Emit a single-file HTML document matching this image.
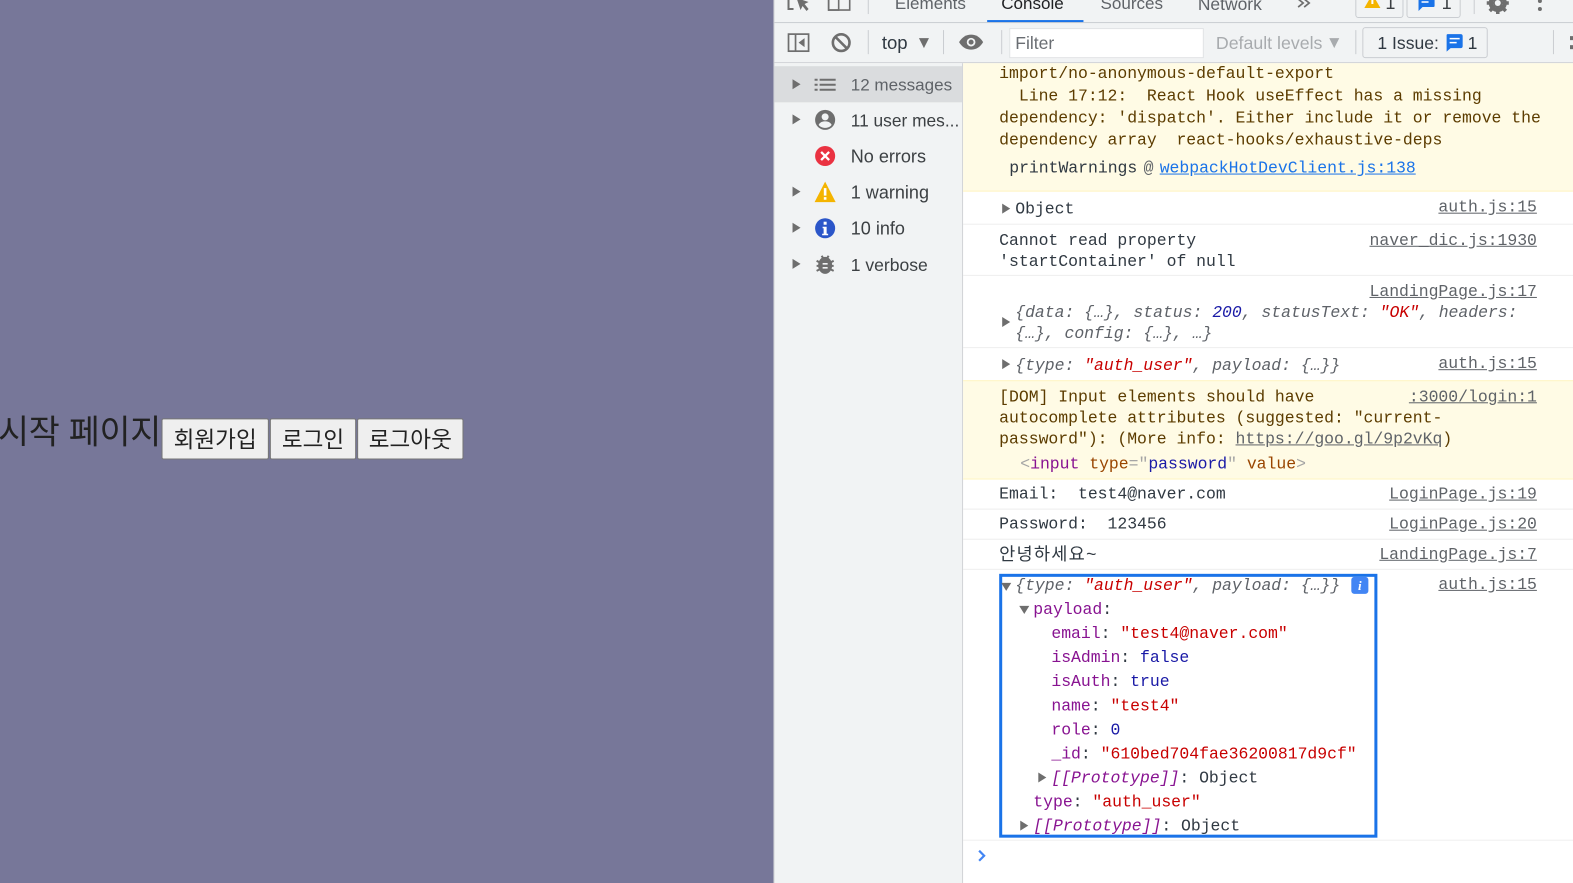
<!DOCTYPE html>
<html><head><meta charset="utf-8">
<style>
html,body{margin:0;padding:0;width:1573px;height:883px;overflow:hidden;background:#fff}
body{position:relative;font-family:"Liberation Sans","Noto Sans CJK KR",sans-serif}
#w{position:absolute;left:0;top:0;width:1573px;height:883px;transform:scale(1.0032);transform-origin:0 0}
.b{position:absolute}
.t{position:absolute;white-space:pre;line-height:20px;height:20px}
.m{font-family:"Liberation Mono","Noto Sans CJK KR",monospace;font-size:16.4px;letter-spacing:-.02px;color:#303942;margin-top:1px}
.s{font-size:18px;color:#3c4043}
.y{color:#5c3c00}
.r{color:#5f6368;text-decoration:underline;right:41px}
.i{font-style:italic;color:#5e6268}
.red{color:#c80000}.blu{color:#1a1aa6}.pur{color:#881391}.dk{color:#303942}
.arr{position:absolute;width:0;height:0;border-left:8px solid #6e6e6e;border-top:5.5px solid transparent;border-bottom:5.5px solid transparent}
.dn{position:absolute;width:0;height:0;border-top:8px solid #6e6e6e;border-left:5.5px solid transparent;border-right:5.5px solid transparent}
.btn{position:absolute;top:417px;height:39px;background:#efefef;border:1px solid #767676;border-radius:2px;box-sizing:content-box;color:#222;font-size:22.5px;line-height:42px;text-align:center;white-space:pre}
svg{position:absolute;overflow:visible}
</style></head><body><div id="w">

<!-- page -->
<div class="b" style="left:0;top:0;width:772px;height:890px;background:#777799"></div>
<div class="t" style="left:-2px;top:412px;height:40px;line-height:40px;font-size:33.6px;color:#222;letter-spacing:-.2px">시작 페이지</div>
<div class="btn" style="left:161px;width:105px">회원가입</div>
<div class="btn" style="left:269px;width:84px">로그인</div>
<div class="btn" style="left:356px;width:104px">로그아웃</div>

<!-- devtools -->
<div class="b" style="left:771px;top:0;width:802px;height:890px;background:#fff;border-left:1px solid #cacdd1;box-sizing:border-box"></div>
<div class="b" style="left:772px;top:0;width:801px;height:62px;background:#f1f3f4"></div>
<div class="b" style="left:772px;top:22px;width:801px;height:1px;background:#cacdd1"></div>
<div class="b" style="left:772px;top:62px;width:801px;height:1px;background:#cacdd1"></div>

<!-- top tabs -->
<svg style="left:785px;top:-4px" width="24" height="18" viewBox="0 0 24 18"><path d="M1 2v11h5" fill="none" stroke="#6e6e6e" stroke-width="2"/><path d="M9 2l4 12 2-4 4 5 2-2-4-5 4-2z" fill="#6e6e6e"/></svg>
<svg style="left:825px;top:-4px" width="24" height="18" viewBox="0 0 24 18"><rect x="1" y="1" width="21" height="13" fill="none" stroke="#6e6e6e" stroke-width="1.6"/><rect x="1" y="1" width="10" height="13" fill="none" stroke="#6e6e6e" stroke-width="1.6"/></svg>
<div class="b" style="left:865px;top:0;width:1px;height:14px;background:#cacdd1"></div>
<div class="t s" style="left:892px;top:-6px;color:#5f6368;font-size:17px">Elements</div>
<div class="t s" style="left:998px;top:-6px;color:#202124;font-size:17px">Console</div>
<div class="b" style="left:984px;top:20px;width:96px;height:2px;background:#1a73e8"></div>
<div class="t s" style="left:1097px;top:-6px;color:#5f6368;font-size:17px">Sources</div>
<div class="t s" style="left:1194px;top:-6px;color:#5f6368;font-size:17.400px">Network</div>
<svg style="left:1293px;top:-2px" width="16" height="12" viewBox="0 0 16 12"><path d="M1 1l5 4-5 4M7 1l5 4-5 4" fill="none" stroke="#6e6e6e" stroke-width="1.7"/></svg>
<div class="b" style="left:1351px;top:-8px;width:46px;height:24px;border:1px solid #cacdd1;border-radius:3px"></div>
<svg style="left:1360px;top:-3px" width="16" height="12" viewBox="0 0 16 12"><path d="M8 -3L16 11H0z" fill="#f4b400"/><rect x="7" y="2" width="2" height="5" fill="#fff"/></svg>
<div class="t s" style="left:1381px;top:-7px;color:#3c4043">1</div>
<div class="b" style="left:1402px;top:-8px;width:52px;height:24px;border:1px solid #cacdd1;border-radius:3px"></div>
<svg style="left:1413px;top:-3px" width="18" height="14" viewBox="0 0 18 14"><path d="M2 -4h14a1.500 1.500 0 0 1 1 1v12a1 1 0 0 1-1 1H5l-4 4V-3a1 1 0 0 1 1-1z" fill="#1a73e8"/><path d="M4 1h10M4 5h7" stroke="#fff" stroke-width="1.500"/></svg>
<div class="t s" style="left:1437px;top:-7px;color:#3c4043">1</div>
<div class="b" style="left:1469px;top:0;width:1px;height:14px;background:#cacdd1"></div>
<svg style="left:1481px;top:-9px" width="24" height="24" viewBox="0 0 24 24"><circle cx="12" cy="12" r="7" fill="none" stroke="#6e6e6e" stroke-width="4"/><path d="M12 1v22M1 12h22M4 4l16 16M20 4L4 20" stroke="#6e6e6e" stroke-width="3.500"/><circle cx="12" cy="12" r="3" fill="#f1f3f4"/></svg>
<div class="b" style="left:1533px;top:-1px;width:4px;height:4px;border-radius:50%;background:#6e6e6e"></div>
<div class="b" style="left:1533px;top:7px;width:4px;height:4px;border-radius:50%;background:#6e6e6e"></div>

<!-- toolbar -->
<svg style="left:785px;top:33px" width="23" height="20" viewBox="0 0 23 20"><rect x="1" y="1" width="20" height="17" fill="none" stroke="#6e6e6e" stroke-width="1.700"/><path d="M8 1v17" stroke="#6e6e6e" stroke-width="1.700"/><path d="M17 5v9l-6-4.500z" fill="#6e6e6e"/></svg>
<svg style="left:828px;top:32px" width="21" height="21" viewBox="0 0 21 21"><circle cx="10.500" cy="10.500" r="8.300" fill="none" stroke="#6e6e6e" stroke-width="2.600"/><path d="M4.500 4.500l12 12" stroke="#6e6e6e" stroke-width="2.600"/></svg>
<div class="b" style="left:865px;top:30px;width:1px;height:24px;background:#cacdd1"></div>
<div class="t s" style="left:879px;top:33px;color:#303942;font-size:18.500px">top</div>
<div class="dn" style="left:916px;top:38px;border-top:10px solid #6e6e6e;border-left-width:5.500px;border-right-width:5.500px"></div>
<div class="b" style="left:940px;top:30px;width:1px;height:24px;background:#cacdd1"></div>
<svg style="left:956px;top:34px" width="24" height="16" viewBox="0 0 24 16"><path d="M0 8C3 3 7 .5 12 .5S21 3 24 8c-3 5-7 7.500-12 7.500S3 13 0 8z" fill="#6e6e6e"/><circle cx="12" cy="8" r="4.300" fill="#f1f3f4"/><circle cx="12" cy="8" r="2.500" fill="#6e6e6e"/></svg>
<div class="b" style="left:998px;top:30px;width:1px;height:24px;background:#cacdd1"></div>
<div class="b" style="left:1006px;top:28px;width:192px;height:28px;background:#fff;border:1px solid #e0e2e4"></div>
<div class="t s" style="left:1012px;top:33px;color:#6a6e73;font-size:17.500px">Filter</div>
<div class="t s" style="left:1212px;top:33px;color:#a8abae;font-size:17.700px">Default levels</div>
<div class="dn" style="left:1325px;top:38px;border-top:10px solid #a8abae;border-left-width:5.500px;border-right-width:5.500px"></div>
<div class="b" style="left:1351px;top:30px;width:1px;height:24px;background:#cacdd1"></div>
<div class="b" style="left:1358px;top:27px;width:123px;height:29px;border:1px solid #cacdd1;border-radius:3px"></div>
<div class="t s" style="left:1373px;top:33px;color:#303942;font-size:17.500px">1 Issue:</div>
<svg style="left:1441px;top:34px" width="18" height="17" viewBox="0 0 18 17"><path d="M2 0h13a2 2 0 0 1 2 2v10a2 2 0 0 1-2 2H5l-4 3.500V1a1 1 0 0 1 1-1z" fill="#1a73e8"/><path d="M4 4.500h10M4 8.500h7" stroke="#fff" stroke-width="1.500"/></svg>
<div class="t s" style="left:1463px;top:33px;color:#303942;font-size:17.500px">1</div>
<div class="b" style="left:1548px;top:30px;width:1px;height:24px;background:#cacdd1"></div>
<div class="b" style="left:1565px;top:36px;width:5px;height:4px;background:#6e6e6e"></div>
<div class="b" style="left:1565px;top:45px;width:5px;height:4px;background:#6e6e6e"></div>

<!-- sidebar -->
<div class="b" style="left:772px;top:63px;width:187px;height:827px;background:#f1f3f4"></div>
<div class="b" style="left:959px;top:63px;width:1px;height:827px;background:#d0d2d6"></div>
<div class="b" style="left:772px;top:66px;width:187px;height:36px;background:#dadcde"></div>

<div class="arr" style="left:790px;top:79px"></div>
<svg style="left:812px;top:78px" width="22" height="13" viewBox="0 0 22 13"><path d="M0 1.500h3M0 6.500h3M0 11.500h3M5 1.500h16M5 6.500h16M5 11.500h16" stroke="#6e6e6e" stroke-width="2"/></svg>
<div class="t s" style="left:848px;top:75px;color:#5f6368;font-size:17px">12 messages</div>

<div class="arr" style="left:790px;top:114px"></div>
<svg style="left:812px;top:109px" width="21" height="21" viewBox="0 0 21 21"><circle cx="10.500" cy="10.500" r="10" fill="#6e6e6e"/><circle cx="10.500" cy="7.500" r="3.500" fill="#f1f3f4"/><path d="M4 15.500c1.500-3 4-3.500 6.500-3.500s5 .5 6.500 3.500c-1.500 2-4 3-6.500 3s-5-1-6.500-3z" fill="#f1f3f4"/></svg>
<div class="t s" style="left:848px;top:110px;font-size:17.300px">11 user mes...</div>

<svg style="left:812px;top:145px" width="21" height="21" viewBox="0 0 21 21"><circle cx="10.500" cy="10.500" r="10" fill="#ea3241"/><path d="M6.500 6.500l8 8M14.500 6.500l-8 8" stroke="#fff" stroke-width="2.300"/></svg>
<div class="t s" style="left:848px;top:146px">No errors</div>

<div class="arr" style="left:790px;top:186px"></div>
<svg style="left:812px;top:181px" width="21" height="21" viewBox="0 0 21 21"><path d="M10.500 0L21 20.500H0z" fill="#f4b400"/><rect x="9.200" y="6.500" width="2.600" height="7.500" fill="#fff"/><rect x="9.200" y="15.500" width="2.600" height="2.600" fill="#fff"/></svg>
<div class="t s" style="left:848px;top:182px">1 warning</div>

<div class="arr" style="left:790px;top:222px"></div>
<svg style="left:812px;top:217px" width="21" height="21" viewBox="0 0 21 21"><circle cx="10.500" cy="10.500" r="10" fill="#2b56c9"/><rect x="9" y="4" width="3" height="3" fill="#fff"/><path d="M8 9h4v7h1.500v1.500h-6V16H9v-5.500H8z" fill="#fff"/></svg>
<div class="t s" style="left:848px;top:218px">10 info</div>

<div class="arr" style="left:790px;top:258px"></div>
<svg style="left:813px;top:253px" width="19" height="21" viewBox="0 0 19 21"><ellipse cx="9.500" cy="11.500" rx="7" ry="8.500" fill="#6e6e6e"/><path d="M1 7l4 2M18 7l-4 2M1 12h4M18 12h-4M1 17l4-2M18 17l-4-2M6 2l2 3M13 2l-2 3" stroke="#6e6e6e" stroke-width="2"/><path d="M7 10h5M7 14h5" stroke="#f1f3f4" stroke-width="1.600"/></svg>
<div class="t s" style="left:848px;top:254px;font-size:17.500px">1 verbose</div>

<!-- warning block -->
<div class="b" style="left:960px;top:63px;width:613px;height:128px;background:#fffbe5;border-bottom:1px solid #fff5c2;box-sizing:border-box"></div>
<div class="t m y" style="left:996px;top:63px">import/no-anonymous-default-export</div>
<div class="t m y" style="left:996px;top:85px">  Line 17:12:  React Hook useEffect has a missing</div>
<div class="t m y" style="left:996px;top:107px">dependency: 'dispatch'. Either include it or remove the</div>
<div class="t m y" style="left:996px;top:129px">dependency array  react-hooks/exhaustive-deps</div>
<div class="t m" style="left:1006px;top:157px">printWarnings</div>
<div class="t m" style="left:1140px;top:157px;color:#5f6368;letter-spacing:0">@</div>
<div class="t m" style="left:1156px;top:157px;color:#1a73e8;text-decoration:underline">webpackHotDevClient.js:138</div>

<!-- Object -->
<div class="arr" style="left:999px;top:203px"></div>
<div class="t m" style="left:1012px;top:198px">Object</div>
<div class="t m r" style="top:196px">auth.js:15</div>
<div class="b" style="left:960px;top:223px;width:613px;height:1px;background:#eeeeee"></div>

<div class="t m" style="left:996px;top:229px">Cannot read property</div>
<div class="t m" style="left:996px;top:250px">'startContainer' of null</div>
<div class="t m r" style="top:229px">naver_dic.js:1930</div>
<div class="b" style="left:960px;top:274px;width:613px;height:1px;background:#eeeeee"></div>

<div class="t m r" style="top:280px">LandingPage.js:17</div>
<div class="arr" style="left:999px;top:316px"></div>
<div class="t m i" style="left:1012px;top:301px">{data: {…}, status: <span class="blu">200</span>, statusText: <span class="red">"OK"</span>, headers:</div>
<div class="t m i" style="left:1012px;top:322px">{…}, config: {…}, …}</div>
<div class="b" style="left:960px;top:346px;width:613px;height:1px;background:#eeeeee"></div>

<div class="arr" style="left:999px;top:358px"></div>
<div class="t m i" style="left:1012px;top:354px">{type: <span class="red">"auth_user"</span>, payload: {…}}</div>
<div class="t m r" style="top:352px">auth.js:15</div>

<!-- DOM warning -->
<div class="b" style="left:960px;top:379px;width:613px;height:99px;background:#fffbe5;border-top:1px solid #fff5c2;border-bottom:1px solid #fff5c2;box-sizing:border-box"></div>
<div class="t m y" style="left:996px;top:385px">[DOM] Input elements should have</div>
<div class="t m y" style="left:996px;top:406px">autocomplete attributes (suggested: "current-</div>
<div class="t m y" style="left:996px;top:427px">password"): (More info: <span style="color:#5f6368;text-decoration:underline">https://goo.gl/9p2vKq</span>)</div>
<div class="t m r" style="top:385px">:3000/login:1</div>
<div class="t m" style="left:1017px;top:452px"><span style="color:#a5a5a5">&lt;</span><span class="pur">input</span> <span style="color:#994500">type</span><span style="color:#a5a5a5">=</span><span style="color:#a5a5a5">"</span><span class="blu">password</span><span style="color:#a5a5a5">"</span> <span style="color:#994500">value</span><span style="color:#a5a5a5">&gt;</span></div>

<div class="t m" style="left:996px;top:482px">Email:  test4@naver.com</div>
<div class="t m r" style="top:482px">LoginPage.js:19</div>
<div class="b" style="left:960px;top:507px;width:613px;height:1px;background:#eeeeee"></div>
<div class="t m" style="left:996px;top:512px">Password:  123456</div>
<div class="t m r" style="top:512px">LoginPage.js:20</div>
<div class="b" style="left:960px;top:537px;width:613px;height:1px;background:#eeeeee"></div>
<div class="t m" style="left:996px;top:544px;color:#303942;letter-spacing:1.2px;font-size:17.500px;margin-top:0">안녕하세요~</div>
<div class="t m r" style="top:542px">LandingPage.js:7</div>
<div class="b" style="left:960px;top:567px;width:613px;height:1px;background:#eeeeee"></div>

<!-- highlighted object -->
<div class="b" style="left:996px;top:572px;width:377px;height:263px;border:3px solid #1a73e8;box-sizing:border-box"></div>
<div class="dn" style="left:998px;top:581px"></div>
<div class="t m i" style="left:1012px;top:573px">{type: <span class="red">"auth_user"</span>, payload: {…}}</div>
<div class="b" style="left:1347px;top:575px;width:17px;height:17px;background:#4285f4;border-radius:3px;color:#fff;font:italic bold 13px/17px 'Liberation Serif',serif;text-align:center">i</div>
<div class="t m r" style="top:572px">auth.js:15</div>
<div class="dn" style="left:1016px;top:604px"></div>
<div class="t m pur" style="left:1030px;top:597px">payload<span class="dk">:</span></div>
<div class="t m pur" style="left:1048px;top:621px">email<span class="dk">:</span> <span class="red">"test4@naver.com"</span></div>
<div class="t m pur" style="left:1048px;top:645px">isAdmin<span class="dk">:</span> <span class="blu">false</span></div>
<div class="t m pur" style="left:1048px;top:669px">isAuth<span class="dk">:</span> <span class="blu">true</span></div>
<div class="t m pur" style="left:1048px;top:693px">name<span class="dk">:</span> <span class="red">"test4"</span></div>
<div class="t m pur" style="left:1048px;top:717px">role<span class="dk">:</span> <span class="blu">0</span></div>
<div class="t m pur" style="left:1048px;top:741px">_id<span class="dk">:</span> <span class="red">"610bed704fae36200817d9cf"</span></div>
<div class="arr" style="left:1035px;top:770px"></div>
<div class="t m pur" style="left:1048px;top:765px"><i>[[Prototype]]</i><span class="dk">: Object</span></div>
<div class="t m pur" style="left:1030px;top:789px">type<span class="dk">:</span> <span class="red">"auth_user"</span></div>
<div class="arr" style="left:1017px;top:818px"></div>
<div class="t m pur" style="left:1030px;top:813px;height:18px;overflow:hidden"><i>[[Prototype]]</i><span class="dk">: Object</span></div>

<div class="b" style="left:960px;top:837px;width:613px;height:1px;background:#eeeeee"></div>
<svg style="left:974px;top:847px" width="10" height="12" viewBox="0 0 10 12"><path d="M2 1l5 5-5 5" fill="none" stroke="#4285f4" stroke-width="2.200"/></svg>
</div></body></html>
